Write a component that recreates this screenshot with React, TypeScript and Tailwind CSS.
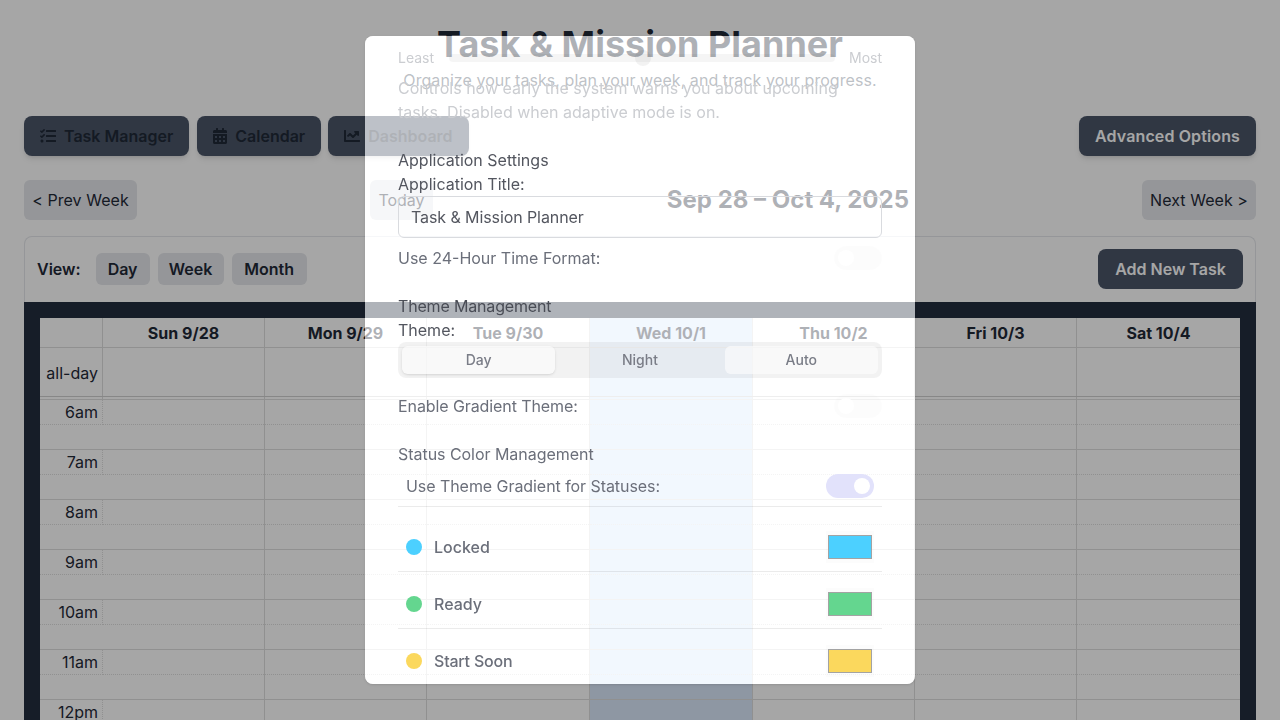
import React from "react";
import { FaTasks, FaCalendarAlt, FaChartLine } from "react-icons/fa";

const days = ["Sun 9/28", "Mon 9/29", "Tue 9/30", "Wed 10/1", "Thu 10/2", "Fri 10/3", "Sat 10/4"];
const hours = ["6am", "7am", "8am", "9am", "10am", "11am", "12pm"];

function NavButton({ icon, label }: { icon: React.ReactNode; label: string }) {
  return (
    <button className="flex h-10 items-center gap-2 rounded-lg bg-[#4a5568] px-4 font-semibold text-[#1f2937] shadow-md">
      {icon}
      {label}
    </button>
  );
}

function Toggle({ on }: { on?: boolean }) {
  return (
    <div className={`flex h-6 w-12 items-center rounded-full px-1 ${on ? "justify-end bg-[#e2e2fb]" : "justify-start bg-black/[0.012]"}`}>
      <div className="h-4 w-4 rounded-full bg-white" />
    </div>
  );
}

function StatusRow({ color, label, last, track }: { color: string; label: string; last?: boolean; track?: string }) {
  return (
    <div className={`flex h-12 shrink-0 items-center justify-between px-2 ${last ? "" : "box-content border-b border-black/[0.08]"}`}>
      <div className="flex items-center gap-3">
        <div className={`h-4 w-4 rounded-full ${color}`} />
        <span className={`font-medium text-[#6b6f7a] ${track ?? ""}`}>{label}</span>
      </div>
      <div className="flex h-8 w-12 items-center justify-center bg-black/[0.012]">
        <div className={`h-6 w-11 border border-[#a3a3a3] ${color}`} />
      </div>
    </div>
  );
}

function Calendar() {
  const cols = "grid grid-cols-[63px_162px_162px_163px_163px_162px_162px_163px]";
  const cell = "border-r border-[#dddddd]";
  return (
    <div className="-mx-px bg-[#222d3e] px-4 pt-4">
      <div className="relative bg-white text-[#1f2937]">
        <div className={`${cols} h-[30px] border-b border-[#dddddd]`}>
          <div className={cell} />
          {days.map((d, i) => (
            <div key={d} className={`flex items-center justify-center font-bold ${i < 6 ? cell : ""} ${i === 3 ? "bg-[#dbe8fb]" : ""}`}>
              {d}
            </div>
          ))}
        </div>
        <div className={`${cols} h-[49px] border-b border-[#cfcfcf]`}>
          <div className={`${cell} flex items-center justify-end pr-1 pt-[2px]`}>all-day</div>
          {days.map((d, i) => (
            <div key={d} className={`${i < 6 ? cell : ""} ${i === 3 ? "bg-[#dbe8fb]" : ""}`} />
          ))}
        </div>
        <div className={`${cols} h-[3px] border-b border-[#dddddd]`}>
          <div className={cell} />
          {days.map((d, i) => (
            <div key={d} className={`${i < 6 ? cell : ""} ${i === 3 ? "bg-[#dbe8fb]" : ""}`} />
          ))}
        </div>
        {hours.map((h) => (
          <div key={h} className={`${cols} h-[50px] border-b border-[#dddddd]`}>
            <div className={`${cell} h-[25px] border-b border-dotted border-b-[#dddddd] pr-1 text-right leading-[24px]`}>{h}</div>
            {days.map((d, i) => (
              <div key={d} className={`${i < 6 ? cell : ""} ${i === 3 ? "bg-[#dbe8fb]" : ""}`}>
                <div className="h-[25px] border-b border-dotted border-[#dddddd]" />
              </div>
            ))}
          </div>
        ))}
      </div>
    </div>
  );
}

function Modal() {
  return (
    <div className="h-[648px] w-[550px] overflow-hidden rounded-lg bg-white/64 px-[33px] pt-3 shadow-sm backdrop-brightness-[1.55]">
      <div className="flex h-5 items-center justify-between text-sm text-[#cbcdd1]">
        <span>Least</span>
        <div className="relative mx-auto h-2 w-[386px] rounded-full bg-black/[0.04]">
          <div className="absolute left-[186px] top-[-4px] h-4 w-4 rounded-full bg-black/[0.05]" />
        </div>
        <span>Most</span>
      </div>
      <p className="mt-2 leading-6 text-[#cbcdd1]">
        Controls how early the system warns you about upcoming tasks. Disabled when adaptive mode is on.
      </p>
      <div className="mt-6 leading-6 text-[#53565f]">Application Settings</div>
      <div className="leading-6 text-[#53565f]">Application Title:</div>
      <div className="flex h-[42px] items-center rounded-md border border-[#d9dbdf] px-3 tracking-[-0.09px] text-[#53565f]">Task &amp; Mission Planner</div>
      <div className="mt-2 flex items-center justify-between text-[#6b6f7a]">
        <span>Use 24-Hour Time Format:</span>
        <Toggle />
      </div>
      <div className="mt-6 leading-6 tracking-[-0.17px] text-[#4a4d56]">Theme Management</div>
      <div className="leading-6 text-[#53565f]">Theme:</div>
      <div className="grid h-9 grid-cols-3 gap-2 rounded-lg bg-black/[0.05] p-1 text-sm font-medium text-[#7a7d87]">
        <div className="flex items-center justify-center rounded-md bg-white/60 shadow-sm">Day</div>
        <div className="flex items-center justify-center">Night</div>
        <div className="flex items-center justify-center rounded-md bg-white/60">Auto</div>
      </div>
      <div className="mt-4 flex items-center justify-between tracking-[-0.09px] text-[#6b6f7a]">
        <span>Enable Gradient Theme:</span>
        <Toggle />
      </div>
      <div className="mt-6 leading-6 tracking-[-0.04px] text-[#6b6f7a]">Status Color Management</div>
      <div className="mt-2 box-content flex h-6 items-center justify-between border-b border-black/[0.08] px-2 pb-2 tracking-[-0.06px] text-[#6b6f7a]">
        <span>Use Theme Gradient for Statuses:</span>
        <Toggle on />
      </div>
      <div className="mt-4 flex flex-col gap-2">
        <StatusRow color="bg-[#4cd0ff]" label="Locked" />
        <StatusRow color="bg-[#64d68f]" label="Ready" />
        <StatusRow color="bg-[#fbd85d]" label="Start Soon" track="tracking-[-0.2px]" last />
      </div>
    </div>
  );
}

export default function App() {
  return (
    <div className="relative h-[720px] w-full overflow-hidden bg-white font-['Inter',sans-serif] text-[#1f2937] [text-rendering:optimizeLegibility]">
      <div className="p-6">
        <h1 className="text-center text-4xl font-bold text-[#1f2937]">Task &amp; Mission Planner</h1>
        <p className="mt-1 text-center leading-6 tracking-[0.066px] text-[#4b5563]">Organize your tasks, plan your week, and track your progress.</p>
        <div className="mt-6 flex items-center justify-between">
          <div className="flex gap-2">
            <NavButton icon={<FaTasks className="h-4 w-4" />} label="Task Manager" />
            <div className="-mr-px">
              <NavButton icon={<FaCalendarAlt className="h-4 w-[14px]" />} label="Calendar" />
            </div>
            <NavButton icon={<FaChartLine className="h-4 w-4" />} label="Dashboard" />
          </div>
          <button className="h-10 w-[177px] rounded-lg bg-[#4a5568] font-semibold tracking-[0.12px] text-white shadow-md">Advanced Options</button>
        </div>
        <div className="mt-6 flex items-center justify-between">
          <button className="h-10 w-[113px] rounded-md bg-[#e5e7eb] tracking-[0.05px]">&lt; Prev Week</button>
          <div className="flex w-[539px] items-center justify-between">
            <button className="h-10 w-[63px] rounded-md bg-[#e5e7eb]">Today</button>
            <div className="text-2xl font-bold">Sep 28 – Oct 4, 2025</div>
          </div>
          <button className="h-10 w-[114px] rounded-md bg-[#e5e7eb] tracking-[0.05px]">Next Week &gt;</button>
        </div>
        <div className="mt-4 rounded-lg border border-b-0 border-[#e5e7eb] bg-white">
          <div className="flex items-center justify-between px-3 pb-[13px] pt-3">
            <div className="flex items-center gap-2 font-semibold">
              <span className="mr-[7px]">View:</span>
              <button className="h-8 w-[54px] rounded-md bg-[#e5e7eb] font-semibold">Day</button>
              <button className="h-8 w-[66px] rounded-md bg-[#e5e7eb] font-semibold">Week</button>
              <button className="h-8 w-[75px] rounded-md bg-[#e5e7eb] font-semibold">Month</button>
            </div>
            <button className="h-10 w-[145px] rounded-lg bg-[#4a5568] font-semibold text-white">Add New Task</button>
          </div>
          <Calendar />
        </div>
      </div>
      <div className="absolute inset-0 flex items-start justify-center bg-black/35 pt-9">
        <Modal />
      </div>
    </div>
  );
}
